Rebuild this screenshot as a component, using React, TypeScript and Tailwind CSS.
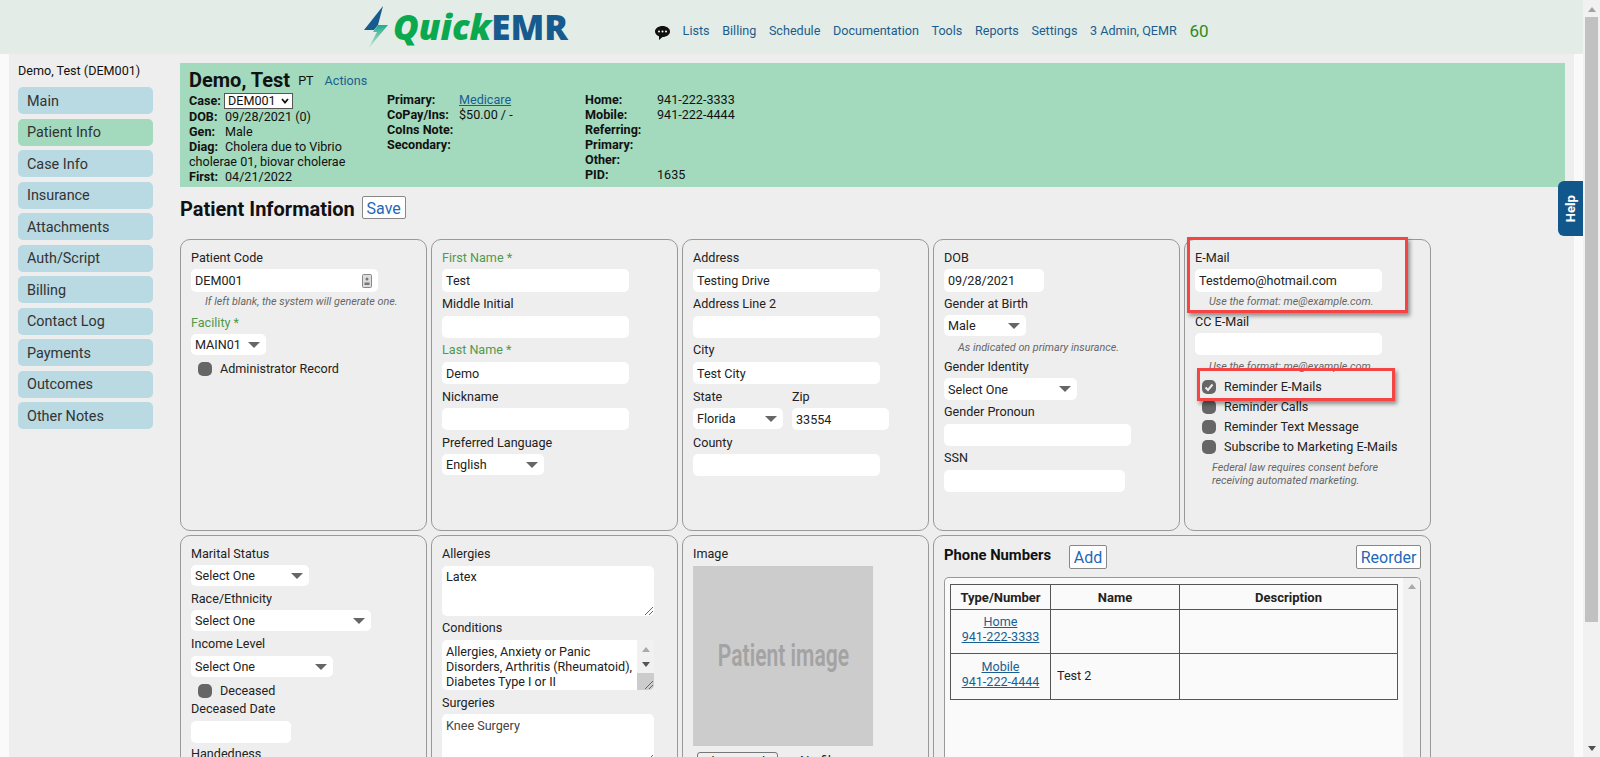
import React from "react";

const sideItems = ["Main", "Patient Info", "Case Info", "Insurance", "Attachments", "Auth/Script", "Billing", "Contact Log", "Payments", "Outcomes", "Other Notes"];
const navItems = ["Lists", "Billing", "Schedule", "Documentation", "Tools", "Reports", "Settings", "3 Admin, QEMR"];

function Arrow() {
  return (
    <svg width="12" height="6" viewBox="0 0 12 6" className="shrink-0">
      <path d="M0 0H12L6 6Z" fill="#666" />
    </svg>
  );
}

function Label({ text, required, className = "" }: { text: string; required?: boolean; className?: string }) {
  return <div className={`text-[12.6px] leading-[15px] ${required ? "text-[#4f9a4f]" : "text-[#222]"} ${className}`}>{text}{required ? " *" : ""}</div>;
}

function Box({ value = "", w = "w-[187px]", h = "h-[22px]", className = "", children }: { value?: string; w?: string; h?: string; className?: string; children?: React.ReactNode }) {
  return (
    <div className={`${w} ${h} ${className} flex items-center justify-between bg-white rounded-[5px] pl-[4px] pr-[6px] text-[12.6px] text-[#222]`}>
      <span className="pt-[2px]">{value}</span>
      {children}
    </div>
  );
}

function Drop({ value, w, className = "" }: { value: string; w: string; className?: string }) {
  return (
    <Box value={value} w={w} h="h-[21px]" className={className}>
      <Arrow />
    </Box>
  );
}

function Hint({ text, className = "" }: { text: string; className?: string }) {
  return <div className={`text-[10.8px] leading-[13px] italic text-[#666] ${className}`}>{text}</div>;
}

function Check({ text, checked, className = "" }: { text: string; checked?: boolean; className?: string }) {
  return (
    <div className={`flex items-center h-[14px] text-[12.6px] text-[#222] ${className}`}>
      <span className="w-[14px] h-[14px] rounded-[5px] bg-[#666] mr-[8px] flex items-center justify-center">
        {checked && (
          <svg width="10" height="10" viewBox="0 0 10 10">
            <path d="M1.5 5.5L4 8L8.5 2.5" fill="none" stroke="#eee" strokeWidth="2" />
          </svg>
        )}
      </span>
      {text}
    </div>
  );
}

function Card({ children, className = "" }: { children: React.ReactNode; className?: string }) {
  return <div className={`border border-[#999] rounded-[10px] pl-[10px] pt-[10px] ${className}`}>{children}</div>;
}

function Info({ k, v, w, link }: { k: string; v?: string; w: string; link?: boolean }) {
  return (
    <div className="flex h-[15px]">
      <span className={`${w} font-bold shrink-0`}>{k}</span>
      {link ? <span className="underline text-[#1a5f91]">{v}</span> : <span>{v}</span>}
    </div>
  );
}

function Textarea({ value, h, className = "", children }: { value: string; h: string; className?: string; children?: React.ReactNode }) {
  return (
    <div className={`w-[212px] ${h} ${className} relative bg-white rounded-[5px] pl-[4px] text-[12.6px] leading-[15px] overflow-hidden`}>
      {value}
      {children}
    </div>
  );
}

function Grip() {
  return (
    <svg width="8" height="8" viewBox="0 0 8 8" className="absolute right-[1px] bottom-[1px]">
      <path d="M0 8L8 0M4 8L8 4" stroke="#666" strokeWidth="1" />
    </svg>
  );
}

export default function App() {
  return (
    <div className="flex w-full h-[757px] overflow-hidden bg-[#fafafa] font-['Roboto',sans-serif] relative">
      <div className="w-[1583px] flex flex-col">
        <header className="h-[54px] shrink-0 bg-[#e3ece7] flex pl-[364px]">
          <div className="flex items-center w-[291px]">
            <svg width="25" height="45" viewBox="0 0 25 45" className="shrink-0">
              <defs>
                <linearGradient id="bolt" x1="0" y1="0" x2="0" y2="1">
                  <stop offset="0" stopColor="#25a98a" />
                  <stop offset="1" stopColor="#c9ecdc" />
                </linearGradient>
              </defs>
              <path d="M19 1L0 25H10L14 20Z" fill="#175a8e" />
              <path d="M24 20H14L9 27H13L4 44Z" fill="url(#bolt)" />
            </svg>
            <span className="ml-[4px] text-[35px] leading-[40px] font-['Open_Sans',sans-serif] font-extrabold italic text-[#0aa84f]">Quick</span>
            <span className="text-[35px] leading-[40px] font-['Open_Sans',sans-serif] font-extrabold text-[#175a8e]">EMR</span>
          </div>
          <nav className="flex items-center gap-[12.6px] pt-[8px] text-[12.6px] text-[#1c5c8c]">
            <svg width="15" height="14" viewBox="0 0 15 14" className="mt-[3px]">
              <path d="M7.5 0C11.6 0 15 2.4 15 5.5S11.6 11 7.5 11L4 14V10.3C1.6 9.4 0 7.6 0 5.5 0 2.4 3.4 0 7.5 0Z" fill="#111" />
              <circle cx="4" cy="5.5" r="1" fill="#fff" />
              <circle cx="7.5" cy="5.5" r="1" fill="#fff" />
              <circle cx="11" cy="5.5" r="1" fill="#fff" />
            </svg>
            {navItems.map((n) => (
              <span key={n}>{n}</span>
            ))}
            <span className="text-[17px] mt-[1px] text-[#2e8b22]">60</span>
          </nav>
        </header>
        <div className="flex-1 flex mx-[9px] bg-[#eee] min-h-0">
          <aside className="w-[171px] shrink-0 pl-[9px]">
            <div className="h-[33px] pt-[9px] text-[12.6px] leading-[15px] text-[#111]">Demo, Test (DEM001)</div>
            <div className="flex flex-col gap-[4.5px] w-[135px]">
              {sideItems.map((s) => (
                <div key={s} className={`h-[27px] rounded-[5px] pl-[9px] pt-[2px] flex items-center text-[14.4px] text-[#333] ${s === "Patient Info" ? "bg-[#a3d9bd]" : "bg-[#b9d9e3]"}`}>
                  {s}
                </div>
              ))}
            </div>
          </aside>
          <main className="flex-1 pt-[9px] pr-[9px] min-w-0">
            <section className="h-[124px] bg-[#a3d9bd] pl-[9px] pt-[6px] text-[12.6px] leading-[15px] text-[#111]">
              <div className="flex items-center h-[22px]">
                <span className="text-[20px] font-bold">Demo, Test</span>
                <span className="ml-[8px]">PT</span>
                <span className="ml-[11px] text-[#1a5f91]">Actions</span>
              </div>
              <div className="flex mt-[1px]">
                <div className="w-[198px]">
                  <div className="flex items-center h-[17px]">
                    <span className="w-[35px] font-bold shrink-0">Case:</span>
                    <div className="w-[69px] h-[16px] bg-white border border-[#555] flex items-center justify-between px-[3px]">
                      DEM001
                      <svg width="8" height="6" viewBox="0 0 8 6">
                        <path d="M1 1L4 4.5L7 1" fill="none" stroke="#111" strokeWidth="1.8" />
                      </svg>
                    </div>
                  </div>
                  <Info k="DOB:" v="09/28/2021 (0)" w="w-[36px]" />
                  <Info k="Gen:" v="Male" w="w-[36px]" />
                  <Info k="Diag:" v="Cholera due to Vibrio" w="w-[36px]" />
                  <div className="h-[15px]">cholerae 01, biovar cholerae</div>
                  <Info k="First:" v="04/21/2022" w="w-[36px]" />
                </div>
                <div className="w-[198px]">
                  <Info k="Primary:" v="Medicare" w="w-[72px]" link />
                  <Info k="CoPay/Ins:" v="$50.00 / -" w="w-[72px]" />
                  <Info k="CoIns Note:" w="w-[72px]" />
                  <Info k="Secondary:" w="w-[72px]" />
                </div>
                <div>
                  <Info k="Home:" v="941-222-3333" w="w-[72px]" />
                  <Info k="Mobile:" v="941-222-4444" w="w-[72px]" />
                  <Info k="Referring:" w="w-[72px]" />
                  <Info k="Primary:" w="w-[72px]" />
                  <Info k="Other:" w="w-[72px]" />
                  <Info k="PID:" v="1635" w="w-[72px]" />
                </div>
              </div>
            </section>
            <div className="flex items-center h-[23px] mt-[9px]">
              <h1 className="text-[20px] pt-[3px] font-bold text-[#111]">Patient Information</h1>
              <button className="ml-[7px] w-[44px] h-[23px] bg-white border border-[#888] rounded-[2px] text-[16px] text-[#1f68b8]">Save</button>
            </div>
            <div className="grid grid-cols-[repeat(5,247px)] grid-rows-[292px_400px] gap-[4px] mt-[20px]">
              <Card>
                <Label text="Patient Code" />
                <Box value="DEM001" h="h-[23px]" className="mt-[4px]">
                  <svg width="10" height="14" viewBox="0 0 10 14">
                    <rect x="0.5" y="0.5" width="9" height="13" rx="1" fill="#ddd" stroke="#888" />
                    <circle cx="5" cy="5" r="1.5" fill="#777" />
                    <path d="M2.5 11V8.5H7.5V11Z" fill="#777" />
                  </svg>
                </Box>
                <Hint text="If left blank, the system will generate one." className="mt-[3px] ml-[14px]" />
                <Label text="Facility" required className="mt-[7px]" />
                <Drop value="MAIN01" w="w-[75px]" className="mt-[4px]" />
                <Check text="Administrator Record" className="mt-[7px] ml-[7px]" />
              </Card>
              <Card>
                <Label text="First Name" required />
                <Box value="Test" h="h-[23px]" className="mt-[4px]" />
                <Label text="Middle Initial" className="mt-[4px]" />
                <Box className="mt-[5px]" />
                <Label text="Last Name" required className="mt-[4px]" />
                <Box value="Demo" className="mt-[5px]" />
                <Label text="Nickname" className="mt-[5px]" />
                <Box className="mt-[4px]" />
                <Label text="Preferred Language" className="mt-[5px]" />
                <Drop value="English" w="w-[102px]" className="mt-[4px]" />
              </Card>
              <Card>
                <Label text="Address" />
                <Box value="Testing Drive" h="h-[23px]" className="mt-[4px]" />
                <Label text="Address Line 2" className="mt-[4px]" />
                <Box className="mt-[5px]" />
                <Label text="City" className="mt-[4px]" />
                <Box value="Test City" className="mt-[5px]" />
                <div className="flex gap-[9px] mt-[5px]">
                  <div>
                    <Label text="State" />
                    <Drop value="Florida" w="w-[90px]" className="mt-[4px]" />
                  </div>
                  <div>
                    <Label text="Zip" />
                    <Box value="33554" w="w-[97px]" className="mt-[4px]" />
                  </div>
                </div>
                <Label text="County" className="mt-[5px]" />
                <Box className="mt-[4px]" />
              </Card>
              <Card>
                <Label text="DOB" />
                <Box value="09/28/2021" w="w-[100px]" h="h-[23px]" className="mt-[4px]" />
                <Label text="Gender at Birth" className="mt-[4px]" />
                <Drop value="Male" w="w-[82px]" className="mt-[4px]" />
                <Hint text="As indicated on primary insurance." className="mt-[5px] ml-[14px]" />
                <Label text="Gender Identity" className="mt-[5px]" />
                <Box value="Select One" w="w-[133px]" className="mt-[4px]"><Arrow /></Box>
                <Label text="Gender Pronoun" className="mt-[4px]" />
                <Box className="mt-[5px]" />
                <Label text="SSN" className="mt-[4px]" />
                <Box w="w-[181px]" className="mt-[5px]" />
              </Card>
              <Card className="relative">
                <Label text="E-Mail" />
                <Box value="Testdemo@hotmail.com" h="h-[23px]" className="mt-[4px]" />
                <Hint text="Use the format: me@example.com." className="mt-[3px] ml-[14px]" />
                <Label text="CC E-Mail" className="mt-[6px]" />
                <Box className="mt-[4px]" />
                <Hint text="Use the format: me@example.com." className="mt-[5px] ml-[14px]" />
                <Check text="Reminder E-Mails" checked className="mt-[7px] ml-[7px]" />
                <Check text="Reminder Calls" className="mt-[6px] ml-[7px]" />
                <Check text="Reminder Text Message" className="mt-[6px] ml-[7px]" />
                <Check text="Subscribe to Marketing E-Mails" className="mt-[6px] ml-[7px]" />
                <Hint text="Federal law requires consent before" className="mt-[7px] ml-[17px]" />
                <Hint text="receiving automated marketing." className="ml-[17px]" />
                <div className="absolute left-[2px] -top-[3px] w-[221px] h-[76px] border-[3px] border-[#f44444] shadow-[2px_3px_4px_rgba(0,0,0,0.4)]" />
                <div className="absolute left-[12px] top-[128px] w-[198px] h-[33px] border-[3px] border-[#f44444] shadow-[2px_3px_4px_rgba(0,0,0,0.4)]" />
              </Card>
              <Card>
                <Label text="Marital Status" />
                <Drop value="Select One" w="w-[118px]" className="mt-[4px]" />
                <Label text="Race/Ethnicity" className="mt-[5px]" />
                <Drop value="Select One" w="w-[180px]" className="mt-[4px]" />
                <Label text="Income Level" className="mt-[5px]" />
                <Drop value="Select One" w="w-[142px]" className="mt-[5px]" />
                <Check text="Deceased" className="mt-[7px] ml-[7px]" />
                <Label text="Deceased Date" className="mt-[3px]" />
                <Box w="w-[100px]" className="mt-[5px]" />
                <Label text="Handedness" className="mt-[3px]" />
              </Card>
              <Card>
                <Label text="Allergies" />
                <Textarea value="Latex" h="h-[50px]" className="mt-[5px] pt-[3px] text-[#222]"><Grip /></Textarea>
                <Label text="Conditions" className="mt-[4px]" />
                <Textarea value="Allergies, Anxiety or Panic Disorders, Arthritis (Rheumatoid), Diabetes Type I or II" h="h-[50px]" className="mt-[5px] pt-[4px] pr-[18px] text-[#222]">
                  <div className="absolute right-0 top-0 bottom-0 w-[17px] flex flex-col items-center bg-[#f1f1f1]">
                    <svg width="8" height="5" viewBox="0 0 8 5" className="mt-[7px]"><path d="M0 5H8L4 0Z" fill="#aaa" /></svg>
                    <svg width="8" height="5" viewBox="0 0 8 5" className="mt-[10px]"><path d="M0 0H8L4 5Z" fill="#555" /></svg>
                    <div className="absolute left-0 right-0 bottom-0 h-[17px] bg-[#ccc]" />
                  </div>
                  <Grip />
                </Textarea>
                <Label text="Surgeries" className="mt-[5px]" />
                <Textarea value="Knee Surgery" h="h-[50px]" className="mt-[4px] pt-[4px] text-[#444]"><Grip /></Textarea>
              </Card>
              <Card>
                <Label text="Image" />
                <div className="w-[180px] h-[180px] bg-[#ccc] mt-[5px] flex items-center justify-center">
                  <span className="inline-block scale-x-[0.68] whitespace-nowrap text-[31px] font-semibold text-[#a3a3a3]">Patient image</span>
                </div>
                <div className="flex items-start mt-[6px] ml-[4px] text-[13.33px] leading-[15px] text-[#222]">
                  <button className="w-[81px] h-[18px] border border-[#777] rounded-[3px] bg-[#efefef] whitespace-nowrap">Choose File</button>
                  <span className="ml-[22px] pt-[1px]">No file</span>
                </div>
              </Card>
              <Card className="col-span-2 pr-[9px]">
                <div className="flex items-start justify-between h-[30px] -mt-[1px]">
                  <div className="flex items-start">
                    <span className="text-[14.8px] leading-[20px] font-bold text-[#111] w-[125px]">Phone Numbers</span>
                    <button className="w-[38px] h-[24px] bg-white border border-[#888] rounded-[2px] text-[16px] text-[#1f68b8]">Add</button>
                  </div>
                  <button className="w-[65px] h-[24px] bg-white border border-[#888] rounded-[2px] text-[16px] text-[#1f68b8]">Reorder</button>
                </div>
                <div className="flex h-[300px] mt-[2px] border-t border-l border-r border-[#999] rounded-[5px] overflow-hidden bg-[#fafafa]">
                  <div className="flex-1 pl-[5px] pt-[6px]">
                    <table className="w-[448px] table-fixed border-collapse text-[12.6px] leading-[15px] text-[#222]">
                      <colgroup>
                        <col className="w-[100px]" />
                        <col className="w-[129px]" />
                        <col />
                      </colgroup>
                      <thead>
                        <tr className="h-[25px] text-[13px]">
                          <th className="border border-[#555]">Type/Number</th>
                          <th className="border border-[#555]">Name</th>
                          <th className="border border-[#555]">Description</th>
                        </tr>
                      </thead>
                      <tbody>
                        <tr className="h-[44px]">
                          <td className="border border-[#555] pb-[6px] text-center text-[#1a5f91] underline">Home<br />941-222-3333</td>
                          <td className="border border-[#555]"></td>
                          <td className="border border-[#555]"></td>
                        </tr>
                        <tr className="h-[46px]">
                          <td className="border border-[#555] pb-[6px] text-center text-[#1a5f91] underline">Mobile<br />941-222-4444</td>
                          <td className="border border-[#555] pl-[6px] pb-[2px]">Test 2</td>
                          <td className="border border-[#555]"></td>
                        </tr>
                      </tbody>
                    </table>
                  </div>
                  <div className="w-[17px] bg-[#f1f1f1] flex justify-center pt-[6px]">
                    <svg width="8" height="5" viewBox="0 0 8 5"><path d="M0 5H8L4 0Z" fill="#aaa" /></svg>
                  </div>
                </div>
              </Card>
            </div>
          </main>
        </div>
      </div>
      <div className="w-[17px] h-full bg-[#f1f1f1] flex flex-col items-center">
        <svg width="8" height="5" viewBox="0 0 8 5" className="mt-[7px] shrink-0"><path d="M0 5H8L4 0Z" fill="#a3a3a3" /></svg>
        <div className="w-[13px] h-[605px] bg-[#c1c1c1] mt-[5px]" />
        <svg width="8" height="5" viewBox="0 0 8 5" className="mt-[124px] shrink-0"><path d="M0 0H8L4 5Z" fill="#505050" /></svg>
      </div>
      <div className="absolute left-[1558px] top-[181px] w-[25px] h-[55px] bg-[#11578c] rounded-l-[6px] flex items-center justify-center">
        <span className="-rotate-90 text-[13px] font-bold text-white">Help</span>
      </div>
    </div>
  );
}
